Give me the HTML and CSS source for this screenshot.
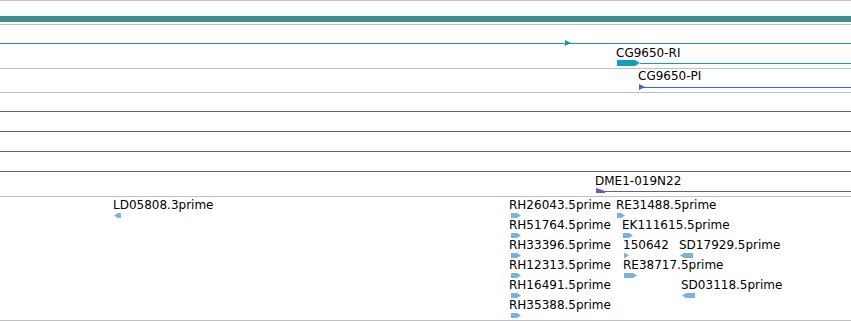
FILE: index.html
```html
<!DOCTYPE html>
<html>
<head>
<meta charset="utf-8">
<title>Track view</title>
<link rel="stylesheet" href="styles.css">
</head>
<body>
<div class="view">
  <div class="track ruler"><div class="band"></div></div>

  <div class="track gene">
    <div class="lane lane-a">
      <div class="line teal lane-a-line"></div>
      <div class="tip-right teal-bg lane-a-tip" style="left:565px"></div>
    </div>
    <div class="lane lane-b">
      <span class="label lab-b" style="left:616px">CG9650-RI</span>
      <div class="line cyan lane-b-line" style="left:640px"></div>
      <div class="block cyan-bg" style="left:617px;width:23px"></div>
    </div>
  </div>

  <div class="track gene-pi">
    <span class="label lab-pi" style="left:638px">CG9650-PI</span>
    <div class="line blue pi-line" style="left:639px"></div>
    <div class="tip-right blue-bg pi-tip" style="left:639px"></div>
  </div>

  <div class="track clones">
    <div class="clone"></div>
    <div class="clone"></div>
    <div class="clone"></div>
    <div class="clone"></div>
    <div class="lane lane-dme">
      <span class="label lab-dme" style="left:595px">DME1-019N22</span>
      <div class="line purple dme-line" style="left:596px"></div>
      <div class="flag purple-bg dme-tip" style="left:596px"></div>
    </div>
  </div>

  <div class="track ests">
    <div class="est-row">
      <span class="label" style="left:113px">LD05808.3prime</span>
      <div class="est est-left" style="left:114px;width:7px"></div>
      <span class="label" style="left:509px">RH26043.5prime</span>
      <div class="est est-right" style="left:511px;width:10px"></div>
      <span class="label" style="left:616px">RE31488.5prime</span>
      <div class="est est-right" style="left:617px;width:8px"></div>
    </div>
    <div class="est-row">
      <span class="label" style="left:509px">RH51764.5prime</span>
      <div class="est est-right" style="left:511px;width:10px"></div>
      <span class="label" style="left:622px">EK111615.5prime</span>
      <div class="est est-right" style="left:623px;width:10px"></div>
    </div>
    <div class="est-row">
      <span class="label" style="left:509px">RH33396.5prime</span>
      <div class="est est-right" style="left:511px;width:10px"></div>
      <span class="label" style="left:623px">150642</span>
      <div class="est est-right" style="left:624px;width:5px"></div>
      <span class="label" style="left:679px">SD17929.5prime</span>
      <div class="est est-left" style="left:680px;width:13px"></div>
    </div>
    <div class="est-row">
      <span class="label" style="left:509px">RH12313.5prime</span>
      <div class="est est-right" style="left:511px;width:10px"></div>
      <span class="label" style="left:623px">RE38717.5prime</span>
      <div class="est est-right" style="left:624px;width:13px"></div>
    </div>
    <div class="est-row">
      <span class="label" style="left:509px">RH16491.5prime</span>
      <div class="est est-right" style="left:511px;width:10px"></div>
      <span class="label" style="left:681px">SD03118.5prime</span>
      <div class="est est-left" style="left:682px;width:13px"></div>
    </div>
    <div class="est-row">
      <span class="label" style="left:509px">RH35388.5prime</span>
      <div class="est est-right" style="left:511px;width:10px"></div>
    </div>
  </div>
</div>
</body>
</html>
```

FILE: styles.css
```css
html, body {
  margin: 0;
  padding: 0;
  background: #ffffff;
  overflow: hidden;
}

.view {
  width: 851px;
  font-family: "DejaVu Sans", "Liberation Sans", sans-serif;
  font-size: 12px;
  line-height: 14px;
  color: #000000;
}

.track {
  position: relative;
  border-bottom: 1px solid #c0c0c0;
}

/* top ruler band: y 0..24 */
.ruler {
  border-top: 1px solid #c0c0c0;
  height: 8px;
  padding-top: 15px;
}
.band {
  height: 6px;
  background: #3f8f8f;
}

/* generic feature pieces */
.lane {
  position: relative;
}
.label {
  position: absolute;
  top: 0;
  white-space: nowrap;
}
.line {
  position: absolute;
  right: 0;
  height: 1px;
}
.teal { background: #1a95ab; }
.teal-bg { background: #1a95ab; }
.cyan { background: #0f9fbf; }
.cyan-bg { background: #0f9fbf; }
.blue { background: #3a66cc; }
.blue-bg { background: #3a66cc; }
.purple { background: #6a5aa3; }
.purple-bg { background: #7058b0; }

.tip-right {
  position: absolute;
  width: 6px;
  height: 6px;
  clip-path: polygon(0 0, 100% 50%, 0 100%);
}

/* first gene track: y 25..67 */
.gene {
  height: 43px;
}
.lane-a {
  height: 19px;
}
.lane-a-line {
  left: 0;
  top: 18px;
}
.lane-a-tip {
  top: 15px;
}
.lane-b {
  height: 24px;
}
.lab-b {
  top: 2px;
}
.lane-b-line {
  top: 19px;
}
.block {
  position: absolute;
  top: 16px;
  height: 6px;
  clip-path: polygon(0 0, calc(100% - 5px) 0, 100% 50%, calc(100% - 5px) 100%, 0 100%);
}

/* second gene track: y 69..91 */
.gene-pi {
  height: 23px;
}
.lab-pi {
  top: 0;
}
.pi-line {
  top: 18px;
}
.pi-tip {
  top: 15px;
  width: 6px;
  height: 6px;
}

/* clones track: y 93..195 */
.clone {
  height: 19px;
  border-bottom: 1px solid #6a5aa3;
}
.clone:first-child {
  height: 18px;
}
.lane-dme {
  height: 24px;
}
.lab-dme {
  top: 2px;
}
.dme-line {
  top: 19px;
}
.flag {
  position: absolute;
  width: 9px;
  height: 5px;
  clip-path: polygon(0 0, 100% 60%, 100% 100%, 0 100%);
}
.dme-tip {
  top: 16px;
}

/* EST track: y 197..319 */
.ests {
  padding-top: 2px;
  padding-bottom: 1px;
}
.est-row {
  position: relative;
  height: 20px;
}
.est-row .label {
  top: -1px;
}
.est {
  position: absolute;
  top: 14px;
  height: 5px;
  background: #7ab2dc;
}
.est-right {
  clip-path: polygon(0 0, calc(100% - 4px) 0, 100% 50%, calc(100% - 4px) 100%, 0 100%);
}
.est-left {
  clip-path: polygon(4px 0, 100% 0, 100% 100%, 4px 100%, 0 50%);
}
```
